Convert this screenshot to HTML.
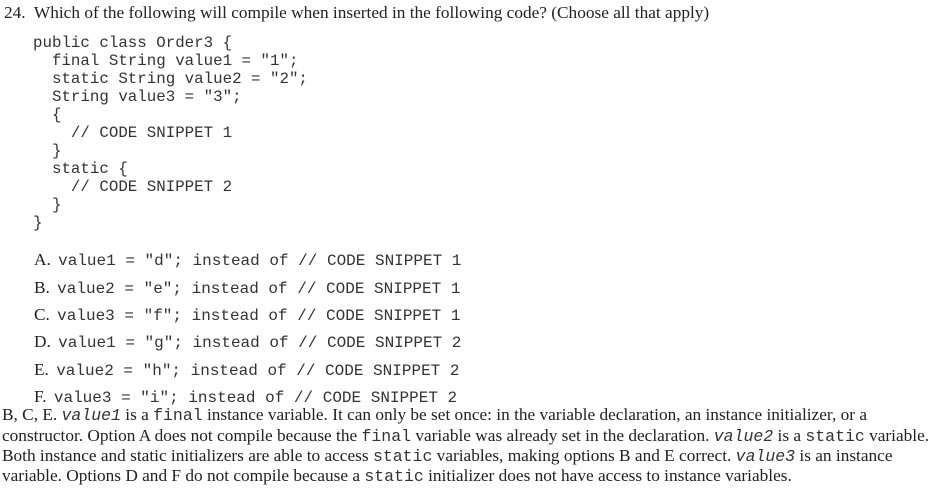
<!DOCTYPE html>
<html><head><meta charset="utf-8"><style>
body{margin:0;width:938px;height:488px;background:#fff;color:#222;position:relative;overflow:hidden}
.s{font-family:"Liberation Serif",serif;font-size:17.3px;position:absolute;white-space:nowrap;line-height:20px}
.m{font-family:"Liberation Mono",monospace;color:#333}
.c{font-family:"Liberation Mono",monospace;font-size:15.8px;position:absolute;white-space:pre;line-height:18px;left:33px;color:#333}
.o{font-family:"Liberation Mono",monospace;font-size:16px;color:#333;margin-left:3px}
.e{font-size:16.5px}
i.m{font-style:italic}
</style></head><body>
<div class="s" style="left:4px;top:3px">24.&nbsp; Which of the following will compile when inserted in the following code? (Choose all that apply)</div>
<div class="c" style="top:34px">public class Order3 {
  final String value1 = "1";
  static String value2 = "2";
  String value3 = "3";
  {
    // CODE SNIPPET 1
  }
  static {
    // CODE SNIPPET 2
  }
}</div>
<div class="s" style="left:34px;top:250px">A. <span class="o">value1 = "d"; instead of // CODE SNIPPET 1</span></div>
<div class="s" style="left:34px;top:278px">B. <span class="o">value2 = "e"; instead of // CODE SNIPPET 1</span></div>
<div class="s" style="left:34px;top:305px">C. <span class="o">value3 = "f"; instead of // CODE SNIPPET 1</span></div>
<div class="s" style="left:34px;top:332px">D. <span class="o">value1 = "g"; instead of // CODE SNIPPET 2</span></div>
<div class="s" style="left:34px;top:360px">E. <span class="o">value2 = "h"; instead of // CODE SNIPPET 2</span></div>
<div class="s" style="left:34px;top:387px">F. <span class="o">value3 = "i"; instead of // CODE SNIPPET 2</span></div>
<div class="s" style="left:2px;top:405px">B, C, E. <i class="m e">value1</i> is a <span class="m e">final</span> instance variable. It can only be set once: in the variable declaration, an instance initializer, or a</div>
<div class="s" style="left:2px;top:426px">constructor. Option A does not compile because the <span class="m e">final</span> variable was already set in the declaration. <i class="m e">value2</i> is a <span class="m e">static</span> variable.</div>
<div class="s" style="left:2px;top:446px">Both instance and static initializers are able to access <span class="m e">static</span> variables, making options B and E correct. <i class="m e">value3</i> is an instance</div>
<div class="s" style="left:2px;top:466px">variable. Options D and F do not compile because a <span class="m e">static</span> initializer does not have access to instance variables.</div>
</body></html>
